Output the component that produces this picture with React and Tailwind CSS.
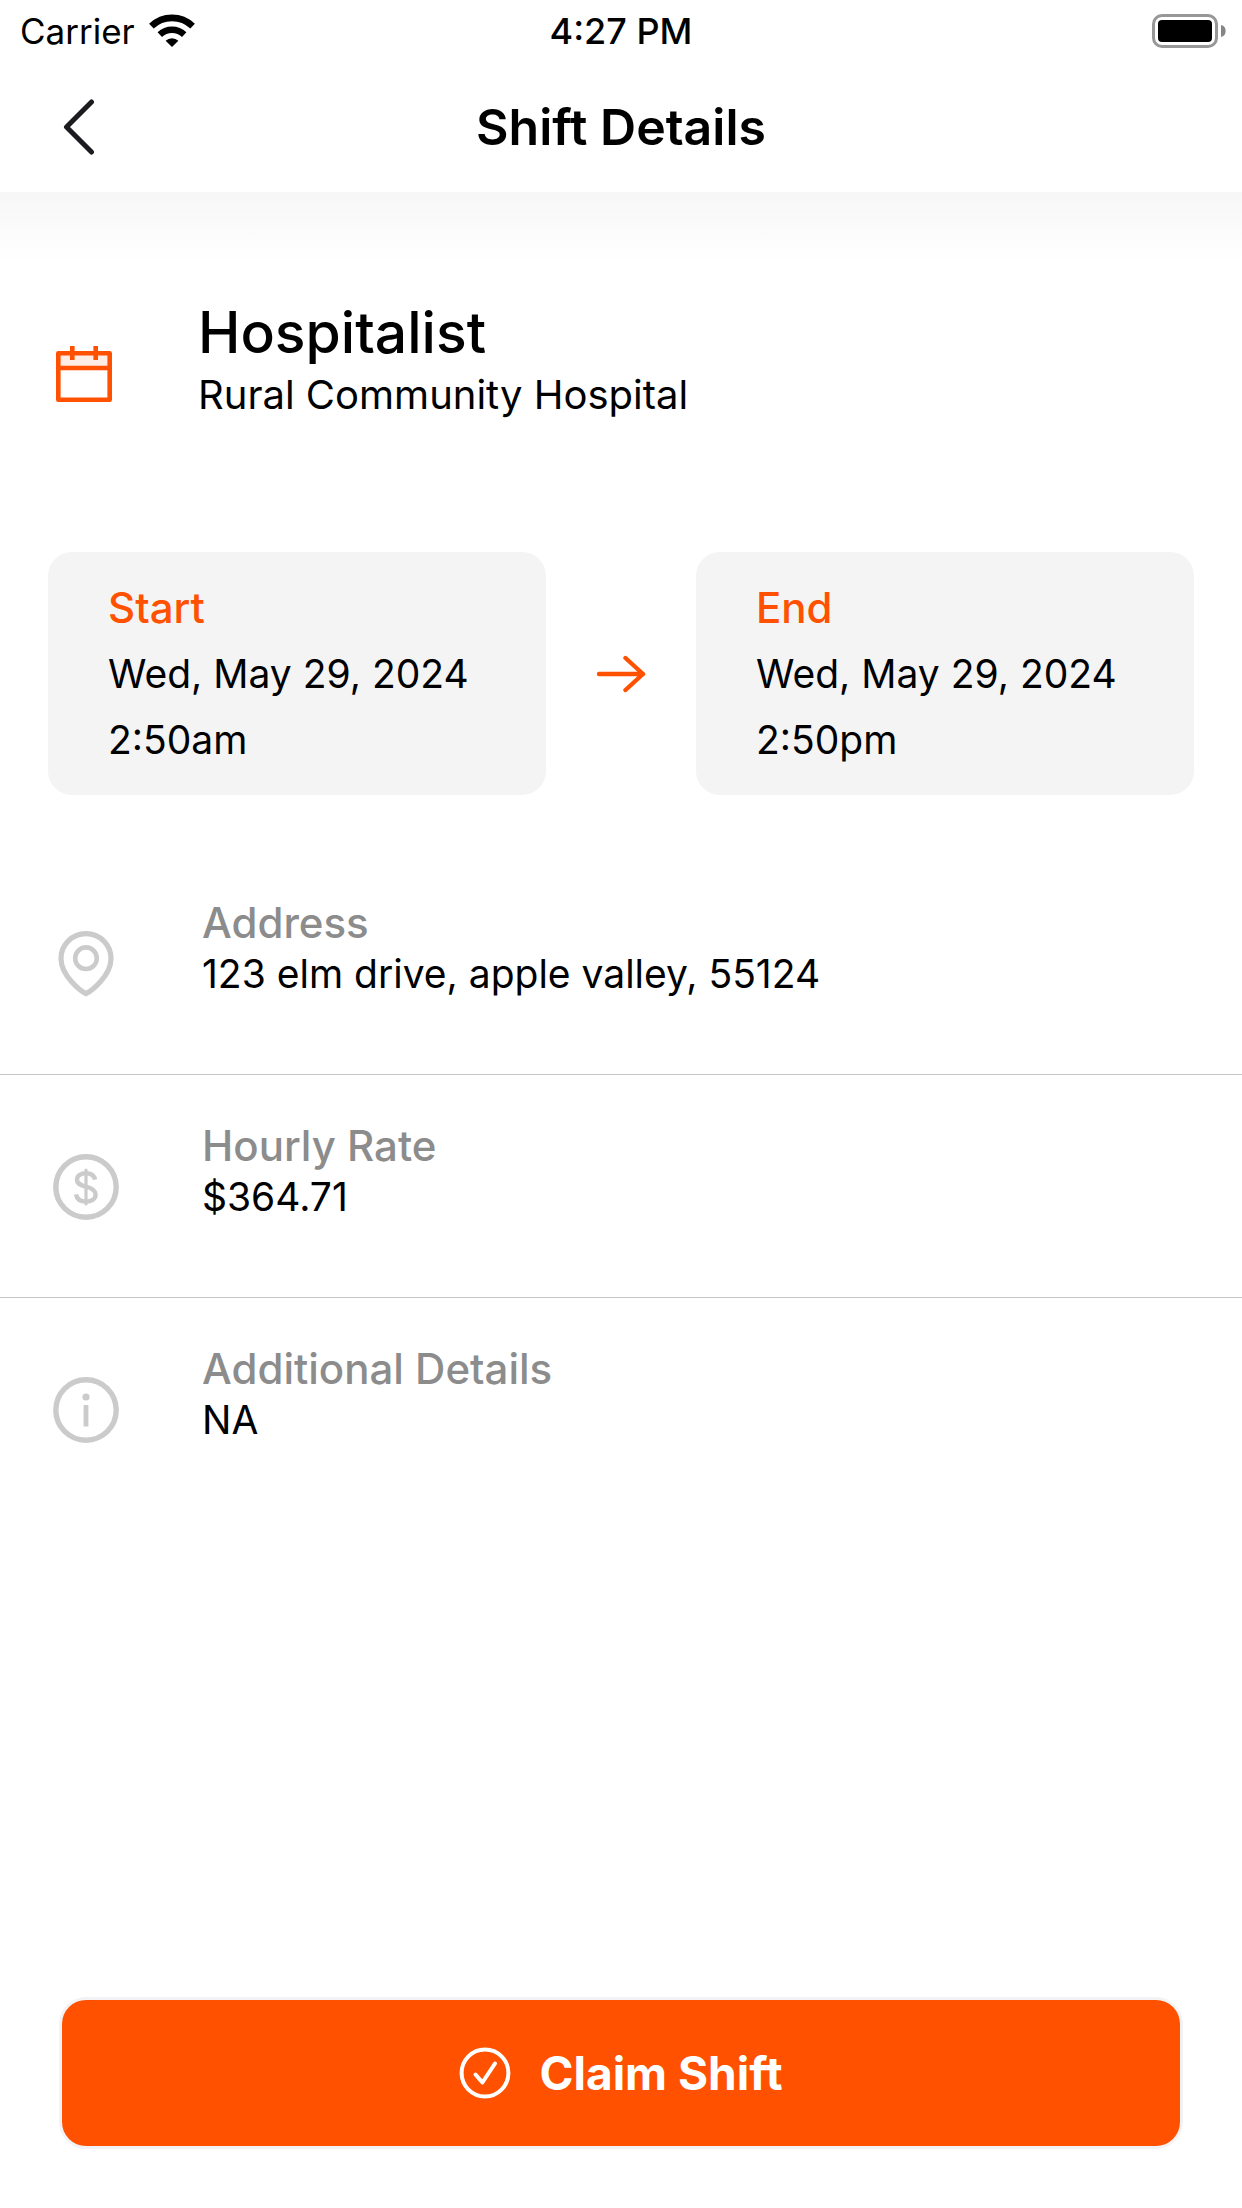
import React from "react";

function WifiIcon() {
  return (
    <svg aria-hidden="true" className="h-[34px] w-[46px]" viewBox="0 0 46 34" fill="none" stroke="#000">
      <path d="M2.4 12.2A29.6 29.6 0 0 1 43.6 12.2" strokeWidth="6.6" />
      <path d="M10.8 20.6A17.6 17.6 0 0 1 35.2 20.6" strokeWidth="6.4" />
      <path d="M23 33 L16.6 26.8 A9.4 9.4 0 0 1 29.4 26.8 Z" fill="#000" stroke="none" />
    </svg>
  );
}

function BatteryIcon() {
  return (
    <svg aria-hidden="true" className="h-[34px] w-[74px]" viewBox="0 0 74 34">
      <rect x="1.5" y="1.5" width="63" height="31" rx="8.5" fill="none" stroke="#979797" strokeWidth="3" />
      <rect x="6" y="6" width="54" height="22" rx="4" fill="#000" />
      <path d="M69 11a6.2 6.2 0 0 1 0 12z" fill="#858585" />
    </svg>
  );
}

function CalendarIcon() {
  return (
    <svg aria-hidden="true" className="h-[56px] w-[56px]" viewBox="0 0 56 56" fill="none" stroke="#ff5100" strokeWidth="4.6">
      <rect x="2.3" y="7.3" width="51.4" height="15" fill="#ffede5" stroke="none" />
      <rect x="2.3" y="7.3" width="51.4" height="46.4" strokeLinejoin="round" />
      <path d="M2.3 22H53.7M16.3 0V14M39.7 0V14" />
    </svg>
  );
}

function PinIcon() {
  return (
    <svg aria-hidden="true" className="h-[66px] w-[66px]" viewBox="0 0 66 66" fill="none" stroke="#cbcbcb">
      <path
        d="M33 62.6C28 60.2 8 45 8 27.4A25 24.8 0 0 1 58 27.4C58 45 38 60.2 33 62.6Z"
        strokeWidth="5.2"
        strokeLinejoin="round"
      />
      <circle cx="33" cy="27.2" r="10.8" strokeWidth="4.6" />
    </svg>
  );
}

function DollarIcon() {
  return (
    <svg aria-hidden="true" className="h-[66px] w-[66px]" viewBox="0 0 66 66" fill="none" stroke="#cbcbcb">
      <circle cx="33" cy="33" r="30.2" strokeWidth="5.4" />
      <path
        d="M42 25.6C41.2 21.4 37.6 19.2 33 19.2C27.6 19.2 24 21.8 24 25.6C24 29.8 27.4 31.3 33 32.7C39 34.2 42.6 36 42.6 40.6C42.6 45 38.6 47.6 33 47.6C27.4 47.6 23.8 45 23 40.4"
        strokeWidth="4.4"
      />
      <path d="M33 16V50" strokeWidth="3.2" strokeLinecap="round" />
    </svg>
  );
}

function InfoIcon() {
  return (
    <svg aria-hidden="true" className="h-[66px] w-[66px]" viewBox="0 0 66 66" fill="none" stroke="#cbcbcb">
      <circle cx="33" cy="33" r="30.2" strokeWidth="5.4" />
      <circle cx="33" cy="20" r="3.6" fill="#cbcbcb" stroke="none" />
      <path d="M33 28V49.5" strokeWidth="4.8" />
    </svg>
  );
}

function ShiftTime({ label, date, time }) {
  return (
    <section className="rounded-3xl bg-[#f4f4f4] px-[60px] pt-[23px] pb-[22px] text-[39px] leading-[66px]">
      <h2 className="text-[42px] font-medium text-[#ff5100]">{label}</h2>
      <p>{date}</p>
      <p>{time}</p>
    </section>
  );
}

function DetailRow({ icon, label, value, last }) {
  return (
    <div
      className={
        last
          ? "flex px-[53px] pt-[45px] pb-[75px]"
          : "flex border-b border-[#c6c6c8] px-[53px] pt-[45px] pb-[75px]"
      }
    >
      <div className="mt-[34px] mr-[83px] shrink-0">{icon}</div>
      <dl className="text-[39px] leading-[51px]">
        <dt className="text-[42px] leading-[51px] font-medium text-[#8c8c8c]">{label}</dt>
        <dd>{value}</dd>
      </dl>
    </div>
  );
}

export default function App() {
  return (
    <div className="flex min-h-screen flex-col bg-white font-['Inter',sans-serif] text-black">
      <header>
        <div className="grid h-[62px] grid-cols-[1fr_auto_1fr] items-center px-[16px] text-[35px]">
          <div className="flex items-center gap-[14px] pl-[4px]">
            <span>Carrier</span>
            <WifiIcon />
          </div>
          <span className="text-[36px] font-medium">4:27 PM</span>
          <div className="flex justify-end">
            <BatteryIcon />
          </div>
        </div>
        <div className="grid h-[130px] grid-cols-[1fr_auto_1fr] items-center px-[43px]">
          <button type="button" aria-label="Back" className="flex size-[72px] items-center justify-center">
            <svg aria-hidden="true" className="h-[56px] w-[32px]" viewBox="0 0 32 56" fill="none">
              <path d="M28.5 3L3.5 28L28.5 53" stroke="#1c1b1f" strokeWidth="5" strokeLinecap="round" strokeLinejoin="round" />
            </svg>
          </button>
          <h1 className="text-[50px] leading-[72px] font-semibold">Shift Details</h1>
        </div>
      </header>

      <main className="flex grow flex-col bg-[linear-gradient(#f7f7f7,#ffffff_72px)]">
        <div className="flex px-[56px] pt-[106px]">
          <div className="mt-[48px] mr-[86px] shrink-0">
            <CalendarIcon />
          </div>
          <div>
            <h2 className="text-[57px] leading-[70px] font-medium">Hospitalist</h2>
            <p className="text-[40px] leading-[54px]">Rural Community Hospital</p>
          </div>
        </div>

        <div className="mt-[130px] grid grid-cols-[1fr_150px_1fr] items-center px-[48px]">
          <ShiftTime label="Start" date="Wed, May 29, 2024" time="2:50am" />
          <svg aria-hidden="true" className="h-[38px] w-[50px] justify-self-center" viewBox="0 0 50 38" fill="none">
            <path
              d="M3 19H47M29.5 3L47 19L29.5 35"
              stroke="#ff5100"
              strokeWidth="4.4"
              strokeLinecap="round"
              strokeLinejoin="round"
            />
          </svg>
          <ShiftTime label="End" date="Wed, May 29, 2024" time="2:50pm" />
        </div>

        <div className="mt-[57px]">
          <DetailRow icon={<PinIcon />} label="Address" value="123 elm drive, apple valley, 55124" />
          <DetailRow icon={<DollarIcon />} label="Hourly Rate" value="$364.71" />
          <DetailRow icon={<InfoIcon />} label="Additional Details" value="NA" last />
        </div>

        <div className="mt-auto px-[62px] pb-[62px]">
          <button
            type="button"
            className="flex h-[146px] w-full items-center justify-center gap-[28px] rounded-3xl bg-[#ff5100] text-[46px] font-bold text-white ring-3 ring-[#f3f3f6]"
          >
            <svg aria-hidden="true" className="size-[52px]" viewBox="0 0 52 52" fill="none" stroke="#fff" strokeLinecap="round" strokeLinejoin="round">
              <circle cx="26" cy="26" r="23.4" strokeWidth="4" />
              <path d="M16.5 27.5L23.4 35.5L36 16.5" strokeWidth="4" />
            </svg>
            Claim Shift
          </button>
        </div>
      </main>
    </div>
  );
}
